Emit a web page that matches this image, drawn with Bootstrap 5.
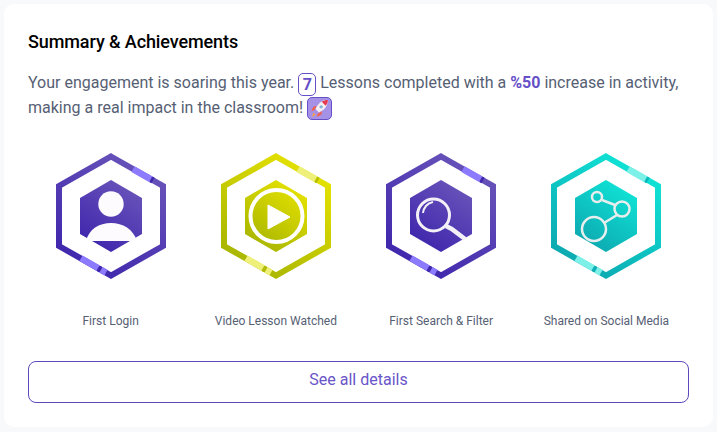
<!DOCTYPE html>
<html lang="en">
<head>
    <meta charset="UTF-8">
    <meta name="viewport" content="width=device-width, initial-scale=1">
    <title>Summary &amp; Achievements</title>
    <link href="https://cdn.jsdelivr.net/npm/bootstrap@5.3.0/dist/css/bootstrap.min.css" rel="stylesheet">
    <style>
        body { background: #f8f9fb; font-family: Roboto, "Liberation Sans", sans-serif; padding: 4px; }
        .summary-card { width: 709px; height: 423px; background: #fff; border-radius: 10px; padding: 24px; }
        .summary-title { font-size: 18px; font-weight: 500; line-height: 28px; color: #000; margin: 0 0 15px; letter-spacing: -0.1px; }
        .summary-text { font-size: 16px; line-height: 24px; color: #566074; margin: 0 0 33px; }
        .summary-text b { color: #6550c8; font-weight: 700; }
        .count-chip { display: inline-block; width: 18px; height: 23px; line-height: 21px; border: 1px solid #6550c8; border-radius: 5px; color: #6550c8; font-weight: 700; text-align: center; font-size: 16px; vertical-align: -2px; }
        .rocket-chip { display: inline-flex; width: 25px; height: 23px; background: #a592e6; border: 1px solid #6550c8; border-radius: 5px; align-items: center; justify-content: center; vertical-align: -5px; }
        .badge-item { width: 165.25px; }
        .badge-item svg { display: block; margin: 0 auto; }
        .badge-name { font-size: 12px; line-height: 16px; color: #566074; margin-top: 34px; white-space: nowrap; }
        .btn.details-btn { height: 42px; margin-top: 32px; border: 1px solid #5f48bc; border-radius: 8px; color: #6a55c8; font-size: 16px; }
    </style>
</head>
<body>
    <div class="summary-card">
        <h5 class="summary-title">Summary &amp; Achievements</h5>
        <p class="summary-text">Your engagement is soaring this year. <span class="count-chip">7</span> Lessons completed with a <b>%50</b> increase in activity, making a real impact in the classroom!
            <span class="rocket-chip">
                <svg width="19" height="19" viewBox="0 0 17 17">
                    <path d="M4 10 1 11l2-4 3-1zM7 13l-1 3 4-2 1-3z" fill="#f0624f"/>
                    <path d="M16 1c-5 0-9 3-11 8l3 3c5-2 8-6 8-11z" fill="#f8eef2"/>
                    <path d="M16 1c-2 0-4 .5-5.500 1.500l3.500 3.500C15.500 4.500 16 3 16 1z" fill="#e5394f"/>
                    <circle cx="10" cy="7" r="1.500" fill="#7fb6d8"/>
                    <path d="M3 12l2 2-3 2z" fill="#f9a03f"/>
                </svg>
            </span>
        </p>
        <div class="d-flex">
            <div class="badge-item text-center">
                <svg width="110" height="126" viewBox="0 0 110 126">
                    <defs>
                        <linearGradient id="gPurple" x1="0.8" y1="0" x2="0.2" y2="1"><stop offset="0" stop-color="#6a55ba"/><stop offset="1" stop-color="#3d24ac"/></linearGradient>
                    </defs>
                    <path d="M55 3.500 107 33V93L55 122.500 3 93V33Z" fill="none" stroke="url(#gPurple)" stroke-width="6"/>
                    <path d="M77 16.100 94.500 26.100M25 105.300 42 115M45 116.800 50 119.600" stroke="#8d7bff" stroke-width="6.500"/>
                    <path d="M95 26.400 97 27.500M42.700 115.500 44.200 116.300" stroke="#3f26ae" stroke-width="6.500"/>
                    <path d="M55 27 86 45V81L55 99 24 81V45Z" fill="url(#gPurple)"/>
                    <circle cx="55" cy="51" r="12.700" fill="#fdfbfd"/>
                    <path d="M30 88c3-12 13-18 25-18s22 6 26 18z" fill="#fdfbfd"/>
                </svg>
                <div class="badge-name">First Login</div>
            </div>
            <div class="badge-item text-center">
                <svg width="110" height="126" viewBox="0 0 110 126">
                    <defs>
                        <linearGradient id="gLime" x1="0.8" y1="0" x2="0.2" y2="1"><stop offset="0" stop-color="#e8e400"/><stop offset="1" stop-color="#a5b300"/></linearGradient>
                    </defs>
                    <path d="M55 3.500 107 33V93L55 122.500 3 93V33Z" fill="none" stroke="url(#gLime)" stroke-width="6"/>
                    <path d="M77 16.100 94.500 26.100M25 105.300 42 115M45 116.800 50 119.600" stroke="#eef07a" stroke-width="6.500"/>
                    <path d="M95 26.400 97 27.500M42.700 115.500 44.200 116.300" stroke="#b5bd00" stroke-width="6.500"/>
                    <path d="M55 27 86 45V81L55 99 24 81V45Z" fill="url(#gLime)"/>
                    <circle cx="55.500" cy="63" r="26" fill="none" stroke="#fff" stroke-width="4"/>
                    <path d="M47 52 69 64 47 76Z" fill="#fff" stroke="#fff" stroke-linejoin="round"/>
                </svg>
                <div class="badge-name">Video Lesson Watched</div>
            </div>
            <div class="badge-item text-center">
                <svg width="110" height="126" viewBox="0 0 110 126">
                    <path d="M55 3.500 107 33V93L55 122.500 3 93V33Z" fill="none" stroke="url(#gPurple)" stroke-width="6"/>
                    <path d="M77 16.100 94.500 26.100M25 105.300 42 115M45 116.800 50 119.600" stroke="#8d7bff" stroke-width="6.500"/>
                    <path d="M95 26.400 97 27.500M42.700 115.500 44.200 116.300" stroke="#3f26ae" stroke-width="6.500"/>
                    <path d="M55 27 86 45V81L55 99 24 81V45Z" fill="url(#gPurple)"/>
                    <circle cx="47.500" cy="62" r="16" fill="none" stroke="#f4f0f8" stroke-width="3"/>
                    <path d="M60 73 65.700 76 79 86" stroke="#f4f0f8" stroke-width="4.500" fill="none"/>
                    <path d="M37 60c.5-5 4-10 10-11" fill="none" stroke="#f4f0f8" stroke-width="2"/>
                </svg>
                <div class="badge-name">First Search &amp; Filter</div>
            </div>
            <div class="badge-item text-center">
                <svg width="110" height="126" viewBox="0 0 110 126">
                    <defs>
                        <linearGradient id="gTeal" x1="0.8" y1="0" x2="0.2" y2="1"><stop offset="0" stop-color="#10e6d8"/><stop offset="1" stop-color="#0ca5ae"/></linearGradient>
                    </defs>
                    <path d="M55 3.500 107 33V93L55 122.500 3 93V33Z" fill="none" stroke="url(#gTeal)" stroke-width="6"/>
                    <path d="M77 16.100 94.500 26.100M25 105.300 42 115M45 116.800 50 119.600" stroke="#7df0e8" stroke-width="6.500"/>
                    <path d="M95 26.400 97 27.500M42.700 115.500 44.200 116.300" stroke="#0fb4b8" stroke-width="6.500"/>
                    <path d="M55 27 86 45V81L55 99 24 81V45Z" fill="url(#gTeal)"/>
                    <g fill="none" stroke="#e8eeee" stroke-width="2.500">
                        <circle cx="46" cy="44" r="5"/><circle cx="71" cy="56" r="7.500"/><circle cx="43" cy="76" r="12"/>
                        <path d="M51 47 64 52M66 62 53 70"/>
                    </g>
                </svg>
                <div class="badge-name">Shared on Social Media</div>
            </div>
        </div>
        <a href="#" class="btn details-btn d-block">See all details</a>
    </div>
    <script src="https://cdn.jsdelivr.net/npm/bootstrap@5.3.0/dist/js/bootstrap.bundle.min.js"></script>
</body>
</html>
